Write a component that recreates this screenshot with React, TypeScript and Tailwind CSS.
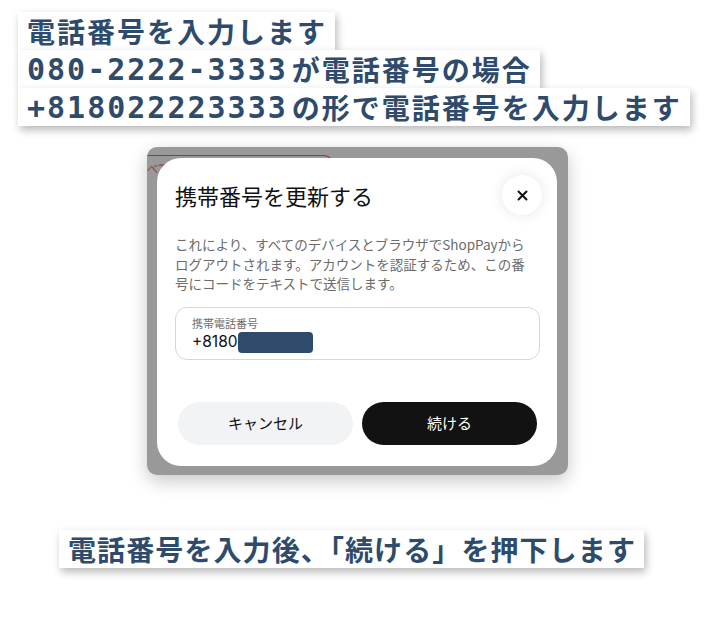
import React from "react"

const jp = "font-['Noto_Sans_CJK_JP',sans-serif]"
const mono = "font-['DejaVu_Sans_Mono','Noto_Sans_CJK_JP',monospace] text-[30px] tracking-[2px] mr-[4px]"

function Note({ children }: { children: React.ReactNode }) {
  return (
    <div className="bg-white pl-[9px] pr-[8px] h-[38px] flex items-center shadow-[2px_4px_8px_rgba(0,0,0,0.28)] whitespace-nowrap">
      {children}
    </div>
  )
}

function PhoneModal() {
  return (
    <div className="relative ml-[147px] w-[421px] rounded-[10px] bg-[#999999] pt-[11px] pl-[10px] pr-[11px] pb-[9px] overflow-hidden shadow-[0_6px_18px_rgba(0,0,0,0.22)]">
      {/* page underneath the overlay */}
      <div className="absolute left-[-60px] top-[8px] w-[247px] h-[100px] rounded-tr-[10px] border-t border-r border-[#8e3e3e]" />
      <span className={`absolute left-[0px] top-[14px] text-[11px] leading-[14px] text-[#8a3a3a] ${jp}`}>べて</span>

      <div className={`relative bg-white rounded-[24px] pt-[17px] pb-[21px] pl-[18px] pr-[15px] font-['Inter','Noto_Sans_CJK_JP',sans-serif]`}>
        <div className="flex items-center justify-between h-[40px]">
          <h2 className={`text-[22px] text-[#111] ${jp}`}>携帯番号を更新する</h2>
          <button className="w-[40px] h-[40px] rounded-full bg-white flex items-center justify-center shadow-[0_0_14px_rgba(0,0,0,0.10)]">
            <svg width="11" height="11" viewBox="0 0 11 11" fill="none" stroke="#111" strokeWidth="2" strokeLinecap="round">
              <path d="M1.5 1.5 9.5 9.5M9.5 1.5 1.5 9.5" />
            </svg>
          </button>
        </div>

        <p className={`mt-[20px] text-[13.5px] leading-[19.5px] text-[#6b6b6b] whitespace-nowrap ${jp}`}>
          これにより、すべてのデバイスとブラウザでShopPayから
          <br />
          ログアウトされます。アカウントを認証するため、この番
          <br />
          号にコードをテキストで送信します。
        </p>

        <div className="mt-[13px] mr-[2px] h-[53px] rounded-[12px] border border-[#d6d6d6] pl-[16px] pt-[8px]">
          <div className={`text-[11px] leading-[14px] text-[#6e6e6e] ${jp}`}>携帯電話番号</div>
          <div className="mt-[2px] flex items-center h-[21px] text-[15.5px] text-[#111]">
            <span>+8180</span>
            <span className="inline-block w-[75px] h-[21px] rounded-[4px] bg-[#2f4b6c]" />
          </div>
        </div>

        <div className={`mt-[42px] flex gap-[9px] pl-[3px] pr-[5px] text-[15px] ${jp}`}>
          <button className="flex-1 h-[43px] rounded-full bg-[#f2f3f5] text-[#111]">キャンセル</button>
          <button className="flex-1 h-[43px] rounded-full bg-[#121212] text-white">続ける</button>
        </div>
      </div>
    </div>
  )
}

export default function App() {
  return (
    <div className={`w-[715px] h-[623px] bg-white overflow-hidden ${jp}`}>
      <div className="flex flex-col items-start pt-[12px] pl-[18px] text-[28px] font-bold tracking-[2px] text-[#2e4b6c]">
        <Note>電話番号を入力します</Note>
        <Note>
          <span className={mono}>080-2222-3333</span>が電話番号の場合
        </Note>
        <Note>
          <span className={mono}>+818022223333</span>の形で電話番号を入力します
        </Note>
      </div>

      <div className="mt-[21px]">
        <PhoneModal />
      </div>

      <div className="mt-[55px] ml-[59px] flex">
        <div className="bg-white h-[38px] pl-[9px] pr-[8px] flex items-center text-[28px] font-bold tracking-[1.1px] text-[#2e4b6c] shadow-[2px_4px_8px_rgba(0,0,0,0.28)] whitespace-nowrap">
          電話番号を入力後、「続ける」を押下します
        </div>
      </div>
    </div>
  )
}
